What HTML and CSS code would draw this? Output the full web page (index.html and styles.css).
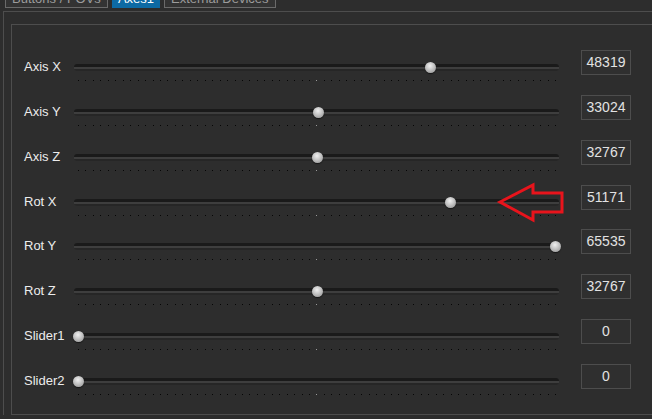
FILE: index.html
```html
<!DOCTYPE html>
<html lang="en">
<head>
    <meta charset="UTF-8">
    <title>Axes1</title>
    <link rel="stylesheet" href="styles.css">
</head>
<body>
    <div class="tabs">
        <div class="tab">Buttons / POVs</div>
        <div class="tab active">Axes1</div>
        <div class="tab">External Devices</div>
    </div>

    <div class="frame">
        <div class="panel">
            <div class="row">
                <span class="label">Axis X</span>
                <div class="slider"><div class="track"></div><div class="rail"><span class="thumb" style="left: 73.73%"></span></div><div class="ticks"></div></div>
                <div class="value">48319</div>
            </div>
            <div class="row">
                <span class="label">Axis Y</span>
                <div class="slider"><div class="track"></div><div class="rail"><span class="thumb" style="left: 50.39%"></span></div><div class="ticks"></div></div>
                <div class="value">33024</div>
            </div>
            <div class="row">
                <span class="label">Axis Z</span>
                <div class="slider"><div class="track"></div><div class="rail"><span class="thumb" style="left: 50%"></span></div><div class="ticks"></div></div>
                <div class="value">32767</div>
            </div>
            <div class="row">
                <span class="label">Rot X</span>
                <div class="slider"><div class="track"></div><div class="rail"><span class="thumb" style="left: 78.08%"></span></div><div class="ticks"></div></div>
                <div class="value">51171</div>
            </div>
            <div class="row">
                <span class="label">Rot Y</span>
                <div class="slider"><div class="track"></div><div class="rail"><span class="thumb" style="left: 100%"></span></div><div class="ticks"></div></div>
                <div class="value">65535</div>
            </div>
            <div class="row">
                <span class="label">Rot Z</span>
                <div class="slider"><div class="track"></div><div class="rail"><span class="thumb" style="left: 50%"></span></div><div class="ticks"></div></div>
                <div class="value">32767</div>
            </div>
            <div class="row">
                <span class="label">Slider1</span>
                <div class="slider"><div class="track"></div><div class="rail"><span class="thumb" style="left: 0%"></span></div><div class="ticks"></div></div>
                <div class="value">0</div>
            </div>
            <div class="row">
                <span class="label">Slider2</span>
                <div class="slider"><div class="track"></div><div class="rail"><span class="thumb" style="left: 0%"></span></div><div class="ticks"></div></div>
                <div class="value">0</div>
            </div>
        </div>
    </div>

    <!-- red marker drawn over the Rot X row -->
    <svg class="arrow" width="74" height="46" viewBox="0 0 74 46">
        <polygon points="5,22 38,5 38,13 67,13 67,32 38,32 38,40" fill="none" stroke="#e8141c" stroke-width="3" stroke-linejoin="miter"/>
    </svg>
</body>
</html>
```

FILE: styles.css
```css
body {
    font-family: "Liberation Sans", Arial, sans-serif;
    font-size: 13px;
    margin: 0;
    background-color: #2d2d2d;
    color: #e6e6e6;
    overflow: hidden;
    position: relative;
    height: 419px;
}

.tabs {
    display: flex;
    gap: 4px;
    padding-left: 5px;
    margin-top: -10px;
    height: 18px;
}

.tab {
    height: 16px;
    line-height: 16px;
    padding: 0 6px;
    border: 1px solid #6a6a6a;
    color: #9c9c9c;
    background-color: #333333;
    font-size: 13px;
    white-space: nowrap;
}

.tab.active {
    background-color: #0d6aa4;
    border-color: #0d6aa4;
    color: #ffffff;
    padding: 0 5px;
}

.frame {
    margin-top: 3px;
    margin-left: 3px;
    border-left: 1px solid #4d4d4d;
    border-top: 1px solid #4d4d4d;
    padding: 12px 0 0 7px;
}

.panel {
    width: 636px;
    height: 364px;
    border: 1px solid #4d4d4d;
    padding: 25px 0 0 12px;
}

.row {
    display: flex;
    align-items: flex-start;
    height: 44.86px;
}

.label {
    width: 50px;
    margin-top: 9px;
    line-height: 16px;
    color: #ececec;
}

.slider {
    position: relative;
    width: 485px;
    margin-top: 14px;
    height: 20px;
}

.track {
    height: 7px;
    border-radius: 3px;
    background: linear-gradient(#1a1a1a 0, #1a1a1a 3px, #3e3e3e 3px, #3e3e3e 5px, #262626 5px);
}

.rail {
    position: absolute;
    left: 4px;
    top: 0;
    width: 477px;
    height: 7px;
}

.thumb {
    position: absolute;
    top: -2px;
    width: 11px;
    height: 11px;
    margin-left: -5px;
    border-radius: 50%;
    background: radial-gradient(circle at 45% 35%, #f0f0f0 0, #c8c8c8 40%, #8c8c8c 100%);
    box-shadow: 0 1px 1px rgba(0, 0, 0, 0.5);
}

.ticks {
    position: relative;
    margin: 9px 0 0 4px;
    width: 478px;
    height: 1px;
    background-image: repeating-linear-gradient(to right, #050505 0, #050505 1px, transparent 1px, transparent 7.453px);
}

.ticks::after {
    content: "";
    position: absolute;
    left: 238px;
    top: 0;
    width: 1px;
    height: 1px;
    background-color: #9a9a9a;
}

.value {
    margin-left: 22px;
    width: 48px;
    height: 23px;
    line-height: 23px;
    border: 1px solid #4d4d4d;
    background-color: #2f2f2f;
    text-align: center;
    font-size: 14px;
    color: #e2e2e2;
}

.arrow {
    position: absolute;
    left: 495px;
    top: 180px;
}
```
